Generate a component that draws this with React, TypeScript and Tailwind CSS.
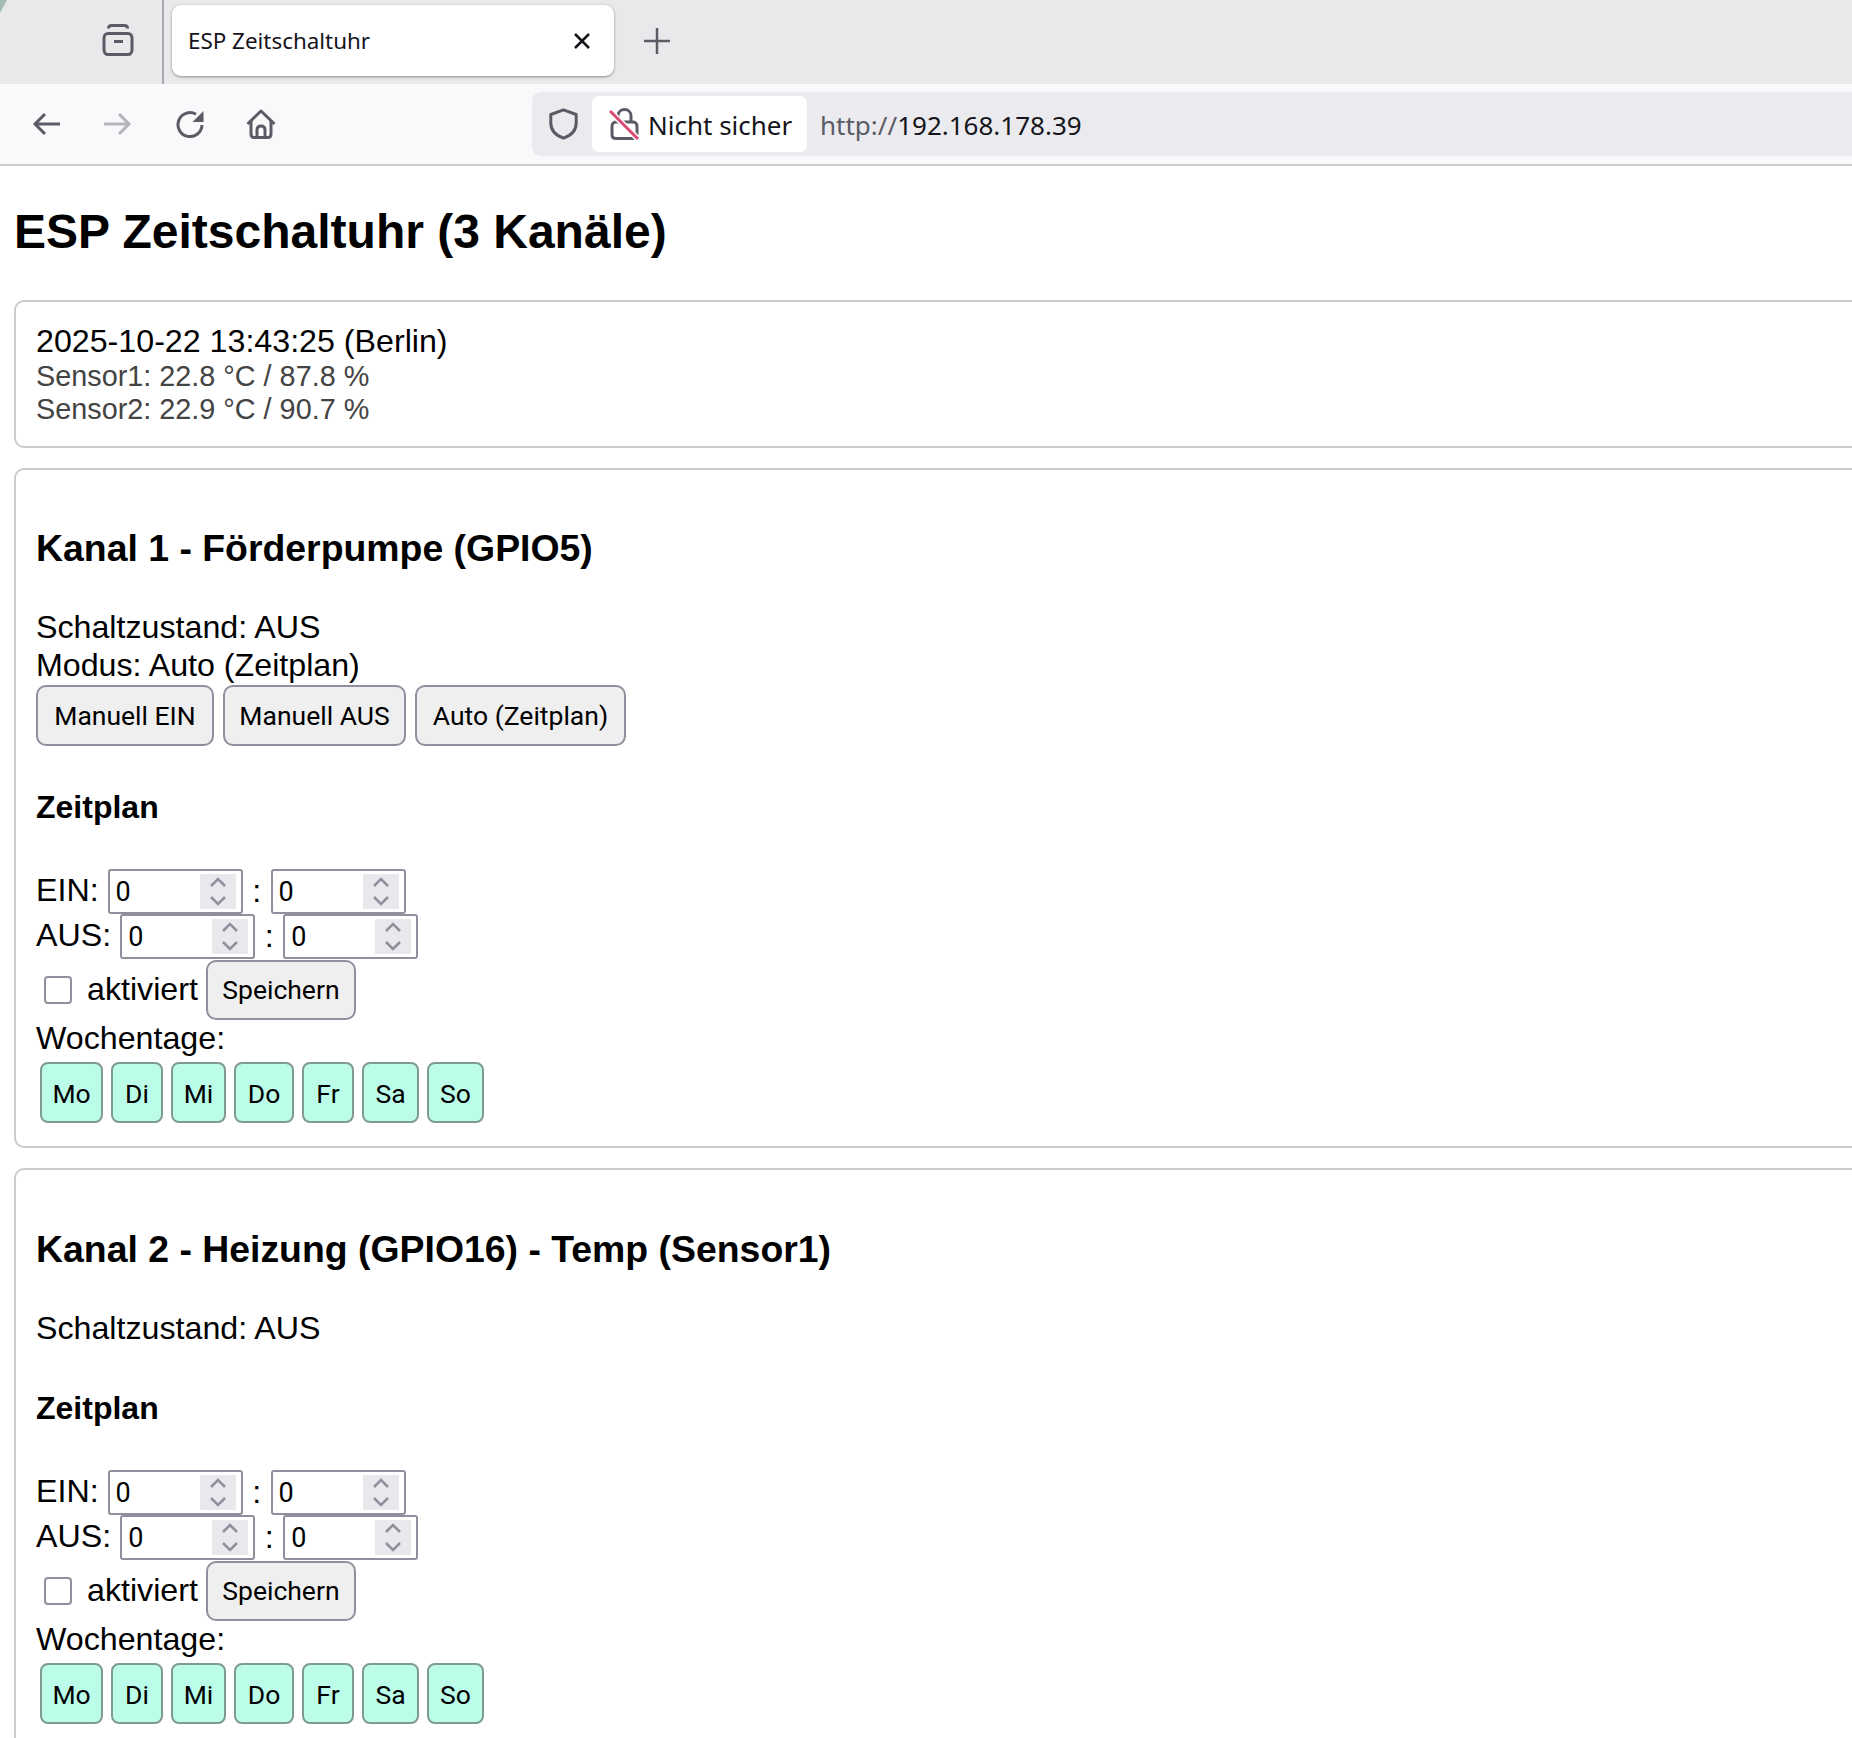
import React from 'react';

const uiFont = "font-['Noto_Sans',sans-serif]";
const buttonFont = "font-['Roboto',sans-serif]";

const ArchiveIcon = () => (
  <svg width="32" height="32" viewBox="0 0 32 32" fill="none" stroke="#5b5b66" strokeWidth="3">
    <path d="M2 14c0-3 2-4.500 4-4.500h20c2 0 4 1.500 4 4.500v12c0 3-2 4.500-4 4.500H6c-2 0-4-1.500-4-4.500z" />
    <path d="M6.500 4.500c0-2 1-3 3-3h13c2 0 3 1 3 3" />
    <path d="M12 17.500h9" />
  </svg>
);

const ArrowIcon = ({ dir, color }: { dir: 'left' | 'right'; color: string }) => (
  <svg width="28" height="24" viewBox="0 0 28 24" fill="none" stroke={color} strokeWidth="3">
    {dir === 'left' ? <path d="M28 12H3M13 2 3 12l10 10" /> : <path d="M0 12h25M15 2l10 10-10 10" />}
  </svg>
);

const ReloadIcon = () => (
  <svg width="28" height="28" viewBox="0 0 28 28" fill="none">
    <path d="M20 4.200A12 12 0 1 0 26 15" stroke="#5b5b66" strokeWidth="3" />
    <path d="M27.500 1v11h-11z" fill="#5b5b66" />
  </svg>
);

const HomeIcon = () => (
  <svg width="30" height="30" viewBox="0 0 30 30" fill="none" stroke="#5b5b66" strokeWidth="3" strokeLinejoin="round">
    <path d="M1.500 15 15 2l13.500 13" />
    <path d="M5 12v13c0 2 1 3.500 3 3.500h14c2 0 3-1.500 3-3.500V12" />
    <path d="M11 28.500V21c0-2.500 1.500-4 4-4s4 1.500 4 4v7.500" />
  </svg>
);

const ShieldIcon = () => (
  <svg width="29" height="32" viewBox="0 0 29 32" fill="none" stroke="#5b5b66" strokeWidth="3" strokeLinejoin="round">
    <path d="M14.500 1.800 27.200 6.500V15c0 7-5 12.500-12.700 15.200C6.800 27.500 1.800 22 1.800 15V6.500z" />
  </svg>
);

const LockOffIcon = () => (
  <svg width="31" height="32" viewBox="0 0 31 32" fill="none" strokeWidth="3">
    <path d="M9 14V8c0-4 3-6.500 6.500-6.500S22 4 22 8v6" stroke="#5b5b66" />
    <path d="M7 14h17c2 0 4 1.500 4 4v9c0 2.500-2 3.500-4 3.500H7c-2 0-4-1-4-3.500v-9c0-2.500 2-4 4-4z" stroke="#5b5b66" />
    <path d="M1 3 29 31" stroke="#ffffff" strokeWidth="6" />
    <path d="M1 3 29 31" stroke="#dc4a74" />
  </svg>
);

const BrowserChrome = () => (
  <div className={`${uiFont} relative border-b-2 border-[#cccccc]`}>
    <svg width="10" height="14" viewBox="0 0 10 14" className="absolute left-0 top-0">
      <path d="M0 0h7L0 13z" fill="#a3bdb6" />
    </svg>
    <div className="flex h-[84px] bg-[#e9e9ec]">
      <div className="flex w-[164px] shrink-0 items-center justify-end border-r-2 border-[#a9a9ad] pb-[4px] pr-[28px]">
        <ArchiveIcon />
      </div>
      <div className="ml-2 mt-[5px] flex h-[71px] w-[442px] items-center justify-between rounded-[9px] bg-white pl-[16px] pr-[23px] shadow-[0_1px_3px_rgba(0,0,0,0.4)]">
        <span className="text-[22.400px] text-[#15141a]">ESP Zeitschaltuhr</span>
        <svg width="18" height="18" viewBox="0 0 18 18" stroke="#15141a" strokeWidth="2.500">
          <path d="M2 2l14 14M16 2 2 16" />
        </svg>
      </div>
      <div className="ml-[30px] mt-[28px] h-[26px]">
        <svg width="26" height="26" viewBox="0 0 26 26" stroke="#5b5b66" strokeWidth="2.500">
          <path d="M13 0v26M0 13h26" />
        </svg>
      </div>
    </div>
    <div className="flex h-[80px] items-center bg-[#f9f9fb]">
      <div className="ml-[32px] flex items-center">
        <ArrowIcon dir="left" color="#5b5b66" />
        <div className="ml-[44px]">
          <ArrowIcon dir="right" color="#b4b4ba" />
        </div>
        <div className="ml-[44px] flex items-center gap-[42px]">
          <ReloadIcon />
          <HomeIcon />
        </div>
      </div>
      <div className="ml-[256px] flex h-[64px] flex-1 items-center rounded-l-[9px] bg-[#ebebef] pl-[17px]">
        <ShieldIcon />
        <div className="ml-[14px] flex h-[56px] w-[215px] items-center rounded-[7px] bg-white pl-[17px]">
          <LockOffIcon />
          <span className="ml-[8px] pt-[2px] text-[26px] text-[#15141a]">Nicht sicher</span>
        </div>
        <span className="ml-[13px] pt-[2px] text-[26px] text-[#15141a]">
          <span className="text-[#5b5b66]">http://</span>192.168.178.39
        </span>
      </div>
    </div>
  </div>
);

const PageButton = ({ label, size }: { label: string; size: string }) => (
  <button className={`${buttonFont} ${size} shrink-0 rounded-[10px] border-2 border-[#8f8f9d] bg-[#efefef] text-center text-[26.500px] text-black`}>
    {label}
  </button>
);

const NumberField = ({ value }: { value: number }) => (
  <div className={`${buttonFont} flex h-[45px] w-[135px] items-center rounded-[3px] border-2 border-[#8f8f9d] bg-white pl-[6px] pr-[5px] text-[27px] text-black`}>
    <span className="flex-1 pt-[2px]">{value}</span>
    <svg width="36" height="35" viewBox="0 0 36 35" className="bg-[#e9e9ed]">
      <path d="M11 12 18 5l7 7M11 23l7 7 7-7" fill="none" stroke="#8f8f9d" strokeWidth="2.500" />
    </svg>
  </div>
);

const TimeRow = ({ label }: { label: string }) => (
  <div className="flex h-[45px] items-center">
    <span className="w-fit pb-[3px]">{label}</span>
    <div className="ml-[9px] flex items-center">
      <NumberField value={0} />
      <span className="w-[28px] text-center">:</span>
      <NumberField value={0} />
    </div>
  </div>
);

const days = [
  { label: 'Mo', w: 'w-[63px]' },
  { label: 'Di', w: 'w-[52px]' },
  { label: 'Mi', w: 'w-[55px]' },
  { label: 'Do', w: 'w-[60px]' },
  { label: 'Fr', w: 'w-[52px]' },
  { label: 'Sa', w: 'w-[57px]' },
  { label: 'So', w: 'w-[57px]' },
];

const Schedule = () => (
  <>
    <h4 className="mt-[42px] text-[32px] font-bold leading-[38px]">Zeitplan</h4>
    <div className="mt-[43px]">
      <TimeRow label="EIN:" />
      <TimeRow label="AUS:" />
    </div>
    <div className="mt-[1px] flex h-[60px] items-center">
      <span className="ml-[8px] h-[28px] w-[28px] rounded-[4px] border-2 border-[#8f8f9d] bg-white" />
      <span className="ml-[15px] mr-[8px] pb-[2px]">aktiviert</span>
      <PageButton label="Speichern" size="h-[60px] w-[150px]" />
    </div>
    <div className="-mt-[1px] leading-[38px]">Wochentage:</div>
    <div className="ml-[4px] mt-[5px] flex gap-[8px]">
      {days.map((d) => (
        <div
          key={d.label}
          className={`${buttonFont} ${d.w} flex h-[61px] items-center justify-center rounded-[8px] border-2 border-[#7f9a92] bg-[#bbfde9] pt-[2px] text-[26.500px] text-black`}
        >
          {d.label}
        </div>
      ))}
    </div>
  </>
);

const App: React.FC = () => {
  return (
    <div className="h-[1738px] w-[1852px] overflow-hidden bg-white text-black">
      <BrowserChrome />
      <div className="pl-[14px] font-['Liberation_Sans',sans-serif] text-[32.200px]">
        <h1 className="mt-[39px] text-[48px] font-bold leading-[54px]">ESP Zeitschaltuhr (3 Kanäle)</h1>

        <div className="mt-[41px] h-[148px] w-[2000px] rounded-[10px] border-2 border-[#cccccc] pl-[20px] pt-[21px]">
          <div className="leading-[37px]">2025-10-22 13:43:25 (Berlin)</div>
          <div className="text-[28.800px] leading-[33px] text-[#444444]">
            <div>Sensor1: 22.8 °C / 87.8 %</div>
            <div>Sensor2: 22.9 °C / 90.7 %</div>
          </div>
        </div>

        <div className="mt-[20px] h-[680px] w-[2000px] rounded-[10px] border-2 border-[#cccccc] pl-[20px] pt-[56px]">
          <h3 className="text-[37.400px] font-bold leading-[44px]">Kanal 1 - Förderpumpe (GPIO5)</h3>
          <div className="mt-[38px] leading-[38px]">Schaltzustand: AUS</div>
          <div className="leading-[38px]">Modus: Auto (Zeitplan)</div>
          <div className="mt-[1px] flex gap-[9px]">
            <PageButton label="Manuell EIN" size="h-[61px] w-[178px]" />
            <PageButton label="Manuell AUS" size="h-[61px] w-[183px]" />
            <PageButton label="Auto (Zeitplan)" size="h-[61px] w-[211px]" />
          </div>
          <Schedule />
        </div>

        <div className="mt-[20px] h-[700px] w-[2000px] rounded-[10px] border-2 border-[#cccccc] pl-[20px] pt-[57px]">
          <h3 className="text-[37.400px] font-bold leading-[44px]">Kanal 2 - Heizung (GPIO16) - Temp (Sensor1)</h3>
          <div className="mt-[38px] leading-[38px]">Schaltzustand: AUS</div>
          <Schedule />
        </div>
      </div>
    </div>
  );
};

export default App;
